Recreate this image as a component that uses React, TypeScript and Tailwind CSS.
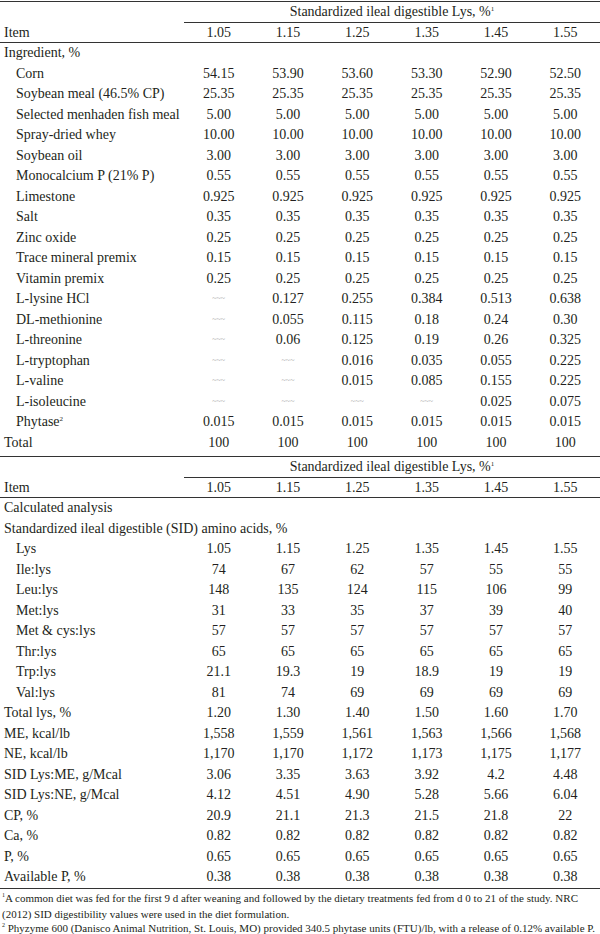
const DASH = '---';

type Row = { label: React.ReactNode; values?: string[]; indent?: boolean };

const same = (v: string) => [v, v, v, v, v, v];

function Sup({ n, size = 'text-[7px]' }: { n: string; size?: string }) {
  return <span className={`relative -top-[5px] ${size}`}>{n}</span>;
}

const ingredients: Row[] = [
  { label: 'Ingredient, %' },
  { label: 'Corn', values: ['54.15', '53.90', '53.60', '53.30', '52.90', '52.50'], indent: true },
  { label: 'Soybean meal (46.5% CP)', values: same('25.35'), indent: true },
  { label: 'Selected menhaden fish meal', values: same('5.00'), indent: true },
  { label: 'Spray-dried whey', values: same('10.00'), indent: true },
  { label: 'Soybean oil', values: same('3.00'), indent: true },
  { label: 'Monocalcium P (21% P)', values: same('0.55'), indent: true },
  { label: 'Limestone', values: same('0.925'), indent: true },
  { label: 'Salt', values: same('0.35'), indent: true },
  { label: 'Zinc oxide', values: same('0.25'), indent: true },
  { label: 'Trace mineral premix', values: same('0.15'), indent: true },
  { label: 'Vitamin premix', values: same('0.25'), indent: true },
  { label: 'L-lysine HCl', values: [DASH, '0.127', '0.255', '0.384', '0.513', '0.638'], indent: true },
  { label: 'DL-methionine', values: [DASH, '0.055', '0.115', '0.18', '0.24', '0.30'], indent: true },
  { label: 'L-threonine', values: [DASH, '0.06', '0.125', '0.19', '0.26', '0.325'], indent: true },
  { label: 'L-tryptophan', values: [DASH, DASH, '0.016', '0.035', '0.055', '0.225'], indent: true },
  { label: 'L-valine', values: [DASH, DASH, '0.015', '0.085', '0.155', '0.225'], indent: true },
  { label: 'L-isoleucine', values: [DASH, DASH, DASH, DASH, '0.025', '0.075'], indent: true },
  {
    label: (
      <>
        Phytase<Sup n="2" />
      </>
    ),
    values: same('0.015'),
    indent: true,
  },
  { label: 'Total', values: same('100') },
];

const analysis: Row[] = [
  { label: 'Calculated analysis' },
  { label: 'Standardized ileal digestible (SID) amino acids, %' },
  { label: 'Lys', values: ['1.05', '1.15', '1.25', '1.35', '1.45', '1.55'], indent: true },
  { label: 'Ile:lys', values: ['74', '67', '62', '57', '55', '55'], indent: true },
  { label: 'Leu:lys', values: ['148', '135', '124', '115', '106', '99'], indent: true },
  { label: 'Met:lys', values: ['31', '33', '35', '37', '39', '40'], indent: true },
  { label: 'Met & cys:lys', values: same('57'), indent: true },
  { label: 'Thr:lys', values: same('65'), indent: true },
  { label: 'Trp:lys', values: ['21.1', '19.3', '19', '18.9', '19', '19'], indent: true },
  { label: 'Val:lys', values: ['81', '74', '69', '69', '69', '69'], indent: true },
  { label: 'Total lys, %', values: ['1.20', '1.30', '1.40', '1.50', '1.60', '1.70'] },
  { label: 'ME, kcal/lb', values: ['1,558', '1,559', '1,561', '1,563', '1,566', '1,568'] },
  { label: 'NE, kcal/lb', values: ['1,170', '1,170', '1,172', '1,173', '1,175', '1,177'] },
  { label: 'SID Lys:ME, g/Mcal', values: ['3.06', '3.35', '3.63', '3.92', '4.2', '4.48'] },
  { label: 'SID Lys:NE, g/Mcal', values: ['4.12', '4.51', '4.90', '5.28', '5.66', '6.04'] },
  { label: 'CP, %', values: ['20.9', '21.1', '21.3', '21.5', '21.8', '22'] },
  { label: 'Ca, %', values: same('0.82') },
  { label: 'P, %', values: same('0.65') },
  { label: 'Available P, %', values: same('0.38') },
];

const levels = ['1.05', '1.15', '1.25', '1.35', '1.45', '1.55'];

function Header() {
  return (
    <>
      <div className="grid h-[20px] grid-cols-[184px_minmax(0,1fr)] items-center">
        <div />
        <div className="text-center">
          Standardized ileal digestible Lys, %<Sup n="1" />
        </div>
      </div>
      <div className="ml-[184px] h-px bg-[#333]" />
      <div className="grid h-[19px] grid-cols-[184px_repeat(6,minmax(0,1fr))] items-center">
        <div className="pl-1">Item</div>
        {levels.map((l) => (
          <div key={l} className="text-center">
            {l}
          </div>
        ))}
      </div>
      <div className="h-px bg-[#333]" />
    </>
  );
}

function Rows({ rows }: { rows: Row[] }) {
  return (
    <div className="flex flex-col">
      {rows.map((r, i) => (
        <div key={i} className="grid h-[20.5px] grid-cols-[184px_repeat(6,minmax(0,1fr))] items-center">
          <div className={`whitespace-nowrap ${r.indent ? 'pl-4' : 'pl-1'}`}>{r.label}</div>
          {r.values?.map((v, j) =>
            v === DASH ? (
              <div key={j} className="text-center text-[8px] text-[#aaa]">
                ~~~
              </div>
            ) : (
              <div key={j} className="text-center">
                {v}
              </div>
            )
          )}
        </div>
      ))}
    </div>
  );
}

export default function App() {
  return (
    <div className="w-[600px] bg-white pt-[1px] font-['Liberation_Serif',serif] text-[14px] leading-none text-[#231f20]">
      <div className="h-px bg-[#333]" />
      <Header />
      <Rows rows={ingredients} />
      <div className="h-[3px]" />
      <div className="h-px bg-[#333]" />
      <Header />
      <Rows rows={analysis} />
      <div className="h-px bg-[#333]" />
      <div className="pl-[2px] pt-[2px] text-[11px] leading-[14px]">
        <p>
          <Sup n="1" size="text-[6px]" />A common diet was fed for the first 9 d after weaning and followed by the
          dietary treatments fed from d 0 to 21 of the study. NRC (2012) SID digestibility values were used in the diet
          formulation.
        </p>
        <p>
          <Sup n="2" size="text-[6px]" /> Phyzyme 600 (Danisco Animal Nutrition, St. Louis, MO) provided 340.5 phytase
          units (FTU)/lb, with a release of 0.12% available P.
        </p>
      </div>
    </div>
  );
}
